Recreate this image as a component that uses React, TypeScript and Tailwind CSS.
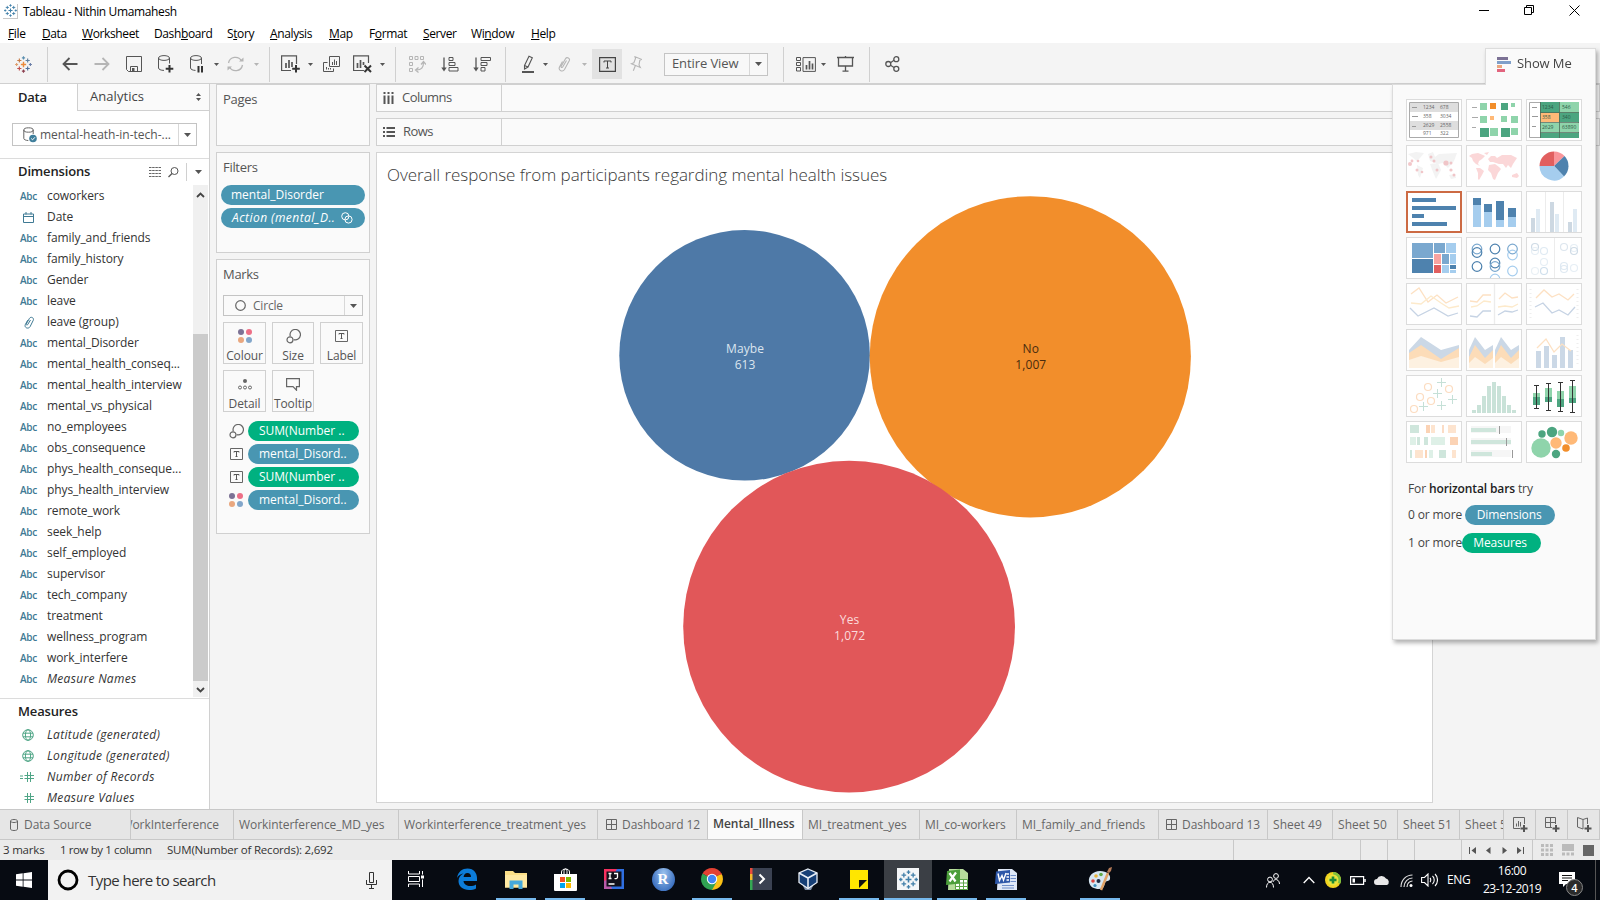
import type { ReactNode } from "react";

type P = { children?: ReactNode; className?: string };

/* ---------- shared primitives ---------- */

function Svg({ w, h, className = "", children }: P & { w: number; h: number }) {
  return (
    <svg width={w} height={h} viewBox={`0 0 ${w} ${h}`} fill="none" className={`shrink-0 ${className}`}>
      {children}
    </svg>
  );
}

function Caret({ className = "", faint = false }: { className?: string; faint?: boolean }) {
  return (
    <Svg w={5} h={3} className={className}>
      <path d="M0 0h5L2.500 3z" fill={faint ? "#b5b5b5" : "#555"} />
    </Svg>
  );
}

function BigCaret({ className = "" }: { className?: string }) {
  return (
    <Svg w={7} h={4} className={className}>
      <path d="M0 0h7L3.500 4z" fill="#555" />
    </Svg>
  );
}

const crossColors = {
  color: ["#eb8a3c", "#c0504d", "#5b8fb0", "#c77a45", "#5f7f9e", "#4f6f9a", "#8c3f4f", "#e0a070", "#6c7fa8"],
  blue: ["#3f7ea8", "#3f7ea8", "#3f7ea8", "#3f7ea8", "#3f7ea8", "#3f7ea8", "#3f7ea8", "#3f7ea8", "#3f7ea8"],
};

function TableauMark({ size, tone, className = "" }: { size: number; tone: "color" | "blue"; className?: string }) {
  const c = crossColors[tone];
  const plus = (x: number, y: number, r: number) => `M${x - r} ${y}h${r * 2}M${x} ${y - r}v${r * 2}`;
  return (
    <svg width={size} height={size} viewBox="0 0 18 18" fill="none" strokeWidth="1.200" className={`shrink-0 ${className}`}>
      <path d={plus(9, 9, 2.8)} stroke={c[0]} strokeWidth="1.500" />
      <path d={plus(4.6, 4.8, 2.2)} stroke={c[3]} />
      <path d={plus(13.4, 4.8, 2.2)} stroke={c[4]} />
      <path d={plus(4.6, 13.2, 2.2)} stroke={c[1]} />
      <path d={plus(13.4, 13.2, 2.2)} stroke={c[5]} />
      <path d={plus(9, 2, 1.7)} stroke={c[2]} />
      <path d={plus(9, 16, 1.7)} stroke={c[6]} />
      <path d={plus(1.7, 9, 1.6)} stroke={c[7]} />
      <path d={plus(16.3, 9, 1.6)} stroke={c[8]} />
    </svg>
  );
}

function TBox({ w = 13, h = 12 }: { w?: number; h?: number }) {
  return (
    <svg width={w} height={h} viewBox="0 0 13 12" fill="none" className="shrink-0">
      <path d="M.5.5h12v11H.5z" stroke="#666" />
      <path d="M4 4.500V3.500h5v1M6.500 3.500v5M5.500 8.500h2" stroke="#555" />
    </svg>
  );
}

function SizeIcon() {
  return (
    <Svg w={15} h={15}>
      <path d="M4.300 7.200A5.200 5.200 0 1 1 7.700 10.600" stroke="#666" strokeWidth="1.200" />
      <circle cx="4" cy="10.800" r="3" stroke="#666" strokeWidth="1.200" />
    </Svg>
  );
}

function Dots() {
  return (
    <Svg w={14} h={14}>
      <circle cx="3" cy="3" r="3" fill="#7c7295" />
      <circle cx="11" cy="3" r="3" fill="#ed6f86" />
      <circle cx="3" cy="11" r="3" fill="#e9a77f" />
      <circle cx="11" cy="11" r="3" fill="#82a6ca" />
    </Svg>
  );
}

/* ---------- title and menu ---------- */

function TitleBar() {
  return (
    <div className="flex h-[22px] items-center bg-white pl-[3px]">
      <div className="flex h-[15px] w-[15px] items-center justify-center border-b border-r border-[#c8c8c8]">
        <TableauMark size={13} tone="blue" />
      </div>
      <span className="ml-[5px] mt-px text-[12px] tracking-[-0.36px] text-black">Tableau - Nithin Umamahesh</span>
      <Svg w={10} h={10} className="ml-auto">
        <path d="M0 4.500h10" stroke="#000" />
      </Svg>
      <Svg w={10} h={10} className="-mt-[2px] ml-[35px]">
        <path d="M.5 2.500h7v7h-7zM2.500 2.500v-2h7v7h-2" stroke="#000" />
      </Svg>
      <Svg w={11} h={11} className="-mt-[2px] ml-[35px] mr-[20px]">
        <path d="M.5.5l10 10M10.500.5l-10 10" stroke="#000" />
      </Svg>
    </div>
  );
}

function MenuBar() {
  const item = "shrink-0 whitespace-nowrap";
  return (
    <div className="flex h-[21px] items-center bg-white pb-[2px] pl-2 pt-[4px] text-[12px] tracking-[-0.38px] text-black">
      <span className={`${item} w-[34px]`}><u>F</u>ile</span>
      <span className={`${item} w-[40px]`}><u>D</u>ata</span>
      <span className={`${item} w-[72px]`}><u>W</u>orksheet</span>
      <span className={`${item} w-[73px]`}>Dash<u>b</u>oard</span>
      <span className={`${item} w-[43px]`}>S<u>t</u>ory</span>
      <span className={`${item} w-[59px]`}><u>A</u>nalysis</span>
      <span className={`${item} w-[40px]`}><u>M</u>ap</span>
      <span className={`${item} w-[54px]`}>F<u>o</u>rmat</span>
      <span className={`${item} w-[48px]`}><u>S</u>erver</span>
      <span className={`${item} w-[60px]`}>Wi<u>n</u>dow</span>
      <span className={item}><u>H</u>elp</span>
    </div>
  );
}

/* ---------- toolbar ---------- */

function Sep({ className = "" }: { className?: string }) {
  return <div className={`h-[35px] w-px shrink-0 bg-[#d0d0d0] ${className}`} />;
}

function Toolbar() {
  const s = "#555";
  const f = "#b5b5b5";
  return (
    <div className="flex h-[41px] items-center border-b border-[#d0d0d0] bg-[#f4f4f4] pt-[2px]">
      <TableauMark size={17} tone="color" className="ml-[15px]" />
      <Sep className="ml-[15px]" />
      <Svg w={16} h={14} className="ml-[14px]"><path d="M15.500 7H1.500M7.500 1l-6 6 6 6" stroke={s} strokeWidth="1.800" /></Svg>
      <Svg w={16} h={14} className="ml-[16px]"><path d="M.5 7h14M8.500 1l6 6-6 6" stroke={f} strokeWidth="1.800" /></Svg>
      <Svg w={16} h={16} className="ml-[16px]">
        <path d="M.5.5h15v15h-13l-2-2z" stroke={s} />
        <path d="M4.500 15.500v-5h7v5" stroke={s} /><path d="M6 12h2.500v3.500H6z" fill={s} />
      </Svg>
      <Svg w={16} h={18} className="ml-[16px]">
        <ellipse cx="6" cy="3" rx="5.500" ry="2.400" stroke={s} />
        <path d="M.5 3v10c0 1.300 2.400 2.400 5.500 2.400M11.500 3v5.500" stroke={s} />
        <path d="M11.500 10v7.500M7.700 13.700h7.600" stroke="#333" strokeWidth="2" />
      </Svg>
      <Svg w={14} h={18} className="ml-[16px]">
        <ellipse cx="6" cy="3" rx="5.500" ry="2.400" stroke={s} />
        <path d="M.5 3v10c0 1.300 2.400 2.400 5 2.400M11.500 3v6" stroke={s} />
        <path d="M8.500 11v6.500M12 11v6.500" stroke="#333" strokeWidth="2" />
      </Svg>
      <Caret className="ml-[10px]" />
      <Svg w={17} h={16} className="ml-[8px]">
        <path d="M1.500 7A7 7 0 0 1 14.500 5M15.500 9A7 7 0 0 1 2.500 11" stroke={f} strokeWidth="1.300" />
        <path d="M12 5.500h4.500V1.500zM5 10.500H.5v4z" fill={f} />
      </Svg>
      <Caret className="ml-[10px]" faint />
      <Sep className="ml-[10px]" />
      <Svg w={19} h={18} className="ml-[11px]">
        <path d="M15.500 9V.9H.6v14.600H10" stroke={s} strokeWidth="1.200" />
        <path d="M5 8v5M8 5v8M11 7v5" stroke={s} strokeWidth="1.700" />
        <path d="M15 10v7.500M11.200 13.700h7.600" stroke="#333" strokeWidth="2" />
      </Svg>
      <Caret className="ml-[8px]" />
      <Svg w={17} h={17} className="ml-[10px]">
        <path d="M6.500.5h10v10h-10zM4.500 6.500h-4v9h10v-3" stroke={s} />
        <path d="M9.500 6v3M11.500 3.500V9M13.500 5v4M3.500 11v2.500M5.500 12v1.500M7.500 12v1.500" stroke={s} />
      </Svg>
      <Svg w={19} h={18} className="ml-[13px]">
        <path d="M15.500 8V.9H.6v14.600H11" stroke={s} strokeWidth="1.200" />
        <path d="M4.500 8v5M7.500 5v8M10.500 7v3" stroke={s} strokeWidth="1.700" />
        <path d="M11.500 10.500l6.500 6.500M18 10.500L11.500 17" stroke="#333" strokeWidth="2" />
      </Svg>
      <Caret className="ml-[8px]" />
      <Sep className="ml-[10px]" />
      <Svg w={17} h={17} className="ml-[13px]">
        <path d="M.5.500h3v3h-3zM6 .5h3v3H6zM11.500.5h3v3h-3zM.5 6.500h3v3h-3zM.5 12.500h3v3h-3z" stroke={f} />
        <path d="M14.500 6.500c0 5-2 7.500-7 7.500M12 8.500l2.500-3 2.500 3M9.500 11.500l-3 2.500 3 2.500" stroke={f} strokeWidth="1.200" />
      </Svg>
      <Svg w={18} h={15} className="ml-[15px]">
        <path d="M3 .5v12" stroke={s} strokeWidth="1.300" /><path d="M.3 10.500h5.400L3 14.500z" fill={s} />
        <path d="M8 .5h4v3H8zM8 5.500h6v3H8zM8 10.500h9v3.500H8z" stroke={s} />
      </Svg>
      <Svg w={18} h={15} className="ml-[14px]">
        <path d="M3 .5v12" stroke={s} strokeWidth="1.300" /><path d="M.3 10.500h5.400L3 14.500z" fill={s} />
        <path d="M8 .5h9.500v3H8zM8 5.500h6v3H8zM8 10.500h4v3.500H8z" stroke={s} />
      </Svg>
      <Sep className="ml-[14px]" />
      <Svg w={12} h={18} className="ml-[16px]">
        <path d="M2.500 10.500L7 1.200l3.300 1.500L6 12l-3.500 2zM2.500 10.500L6 12" stroke={s} strokeWidth="1.100" />
        <path d="M0 17h12" stroke={s} strokeWidth="2" />
      </Svg>
      <Caret className="ml-[9px]" />
      <Svg w={13} h={16} className="ml-[10px]">
        <path d="M8.500 4.500L4.700 11c-.6 1-2 .3-1.500-.8L7.500 2.700c1.300-2.200 5-.6 3.700 2.100L6.500 13.500c-1.800 3-6.500 1-5-2.500l3-5.500" stroke={f} strokeWidth="1.100" />
      </Svg>
      <Caret className="ml-[11px]" faint />
      <div className="ml-[5px] flex h-[30px] w-[30px] items-center justify-center bg-[#e2e2e2]">
        <Svg w={17} h={15}>
          <path d="M.6.6h15.800v13.800H.6z" stroke="#444" strokeWidth="1.200" />
          <path d="M5 5.500V4h7v1.500M8.500 4v7M7 11h3" stroke="#444" />
        </Svg>
      </div>
      <Svg w={12} h={16} className="ml-[8px]">
        <path d="M5 .7l6.500 2.600-1.700 1L9 9l1.300 2.500-9-3.700 2.600-1L5.500 2.500zM5.300 9.800l-2 5" stroke={f} strokeWidth="1.100" />
      </Svg>
      <div className="ml-[22px] flex h-[23px] w-[104px] items-center border border-[#c4c4c4] bg-[#f8f8f8]">
        <span className="w-[84px] whitespace-nowrap pl-[7px] text-[13px] tracking-[-0.1px] text-[#555]">Entire View</span>
        <div className="flex h-full flex-1 items-center justify-center border-l border-[#d8d8d8]"><BigCaret /></div>
      </div>
      <Sep className="ml-[15px]" />
      <Svg w={20} h={15} className="ml-[12px]">
        <path d="M.5.5h4v3h-4zM.5 5.500h4v3h-4zM.5 10.500h4v3.500h-4zM7 .6h12.400v13.800H7z" stroke={s} />
        <path d="M10.500 8v4.500M13.500 4v8.500M16.500 6.500v6" stroke={s} strokeWidth="1.700" />
      </Svg>
      <Caret className="ml-[5px]" />
      <Svg w={17} h={16} className="ml-[11px]">
        <path d="M0 1.500h17M8.500 0v1.500M1.500 1.500v8.500h14V1.500M8.500 10v5M5.500 15.200h6" stroke={s} strokeWidth="1.300" />
      </Svg>
      <Sep className="ml-[15px]" />
      <Svg w={15} h={16} className="ml-[15px]">
        <path d="M5.500 6.700L9 4.300M5.500 9.300L9 11.500" stroke={s} strokeWidth="1.200" />
        <circle cx="3.300" cy="8" r="2.500" stroke={s} strokeWidth="1.300" />
        <circle cx="11.300" cy="3.200" r="2.500" stroke={s} strokeWidth="1.300" />
        <circle cx="11.300" cy="12.800" r="2.500" stroke={s} strokeWidth="1.300" />
      </Svg>
    </div>
  );
}

/* ---------- data pane ---------- */

const dimensions = [
  "coworkers", "Date", "family_and_friends", "family_history", "Gender", "leave", "leave (group)",
  "mental_Disorder", "mental_health_conseq...", "mental_health_interview", "mental_vs_physical",
  "no_employees", "obs_consequence", "phys_health_conseque...", "phys_health_interview", "remote_work",
  "seek_help", "self_employed", "supervisor", "tech_company", "treatment", "wellness_program",
  "work_interfere", "Measure Names",
];
const measures = ["Latitude (generated)", "Longitude (generated)", "Number of Records", "Measure Values"];

function FieldIcon({ name }: { name: string }) {
  if (name === "Date")
    return (
      <Svg w={11} h={11}>
        <path d="M.5 2h10v8.500H.5zM.5 4.500h10M3 0v2.500M8 0v2.500" stroke="#3f7a94" />
      </Svg>
    );
  if (name === "leave (group)")
    return (
      <Svg w={12} h={13}>
        <path d="M7.500 4L4.600 8.700c-.6.900-1.800.2-1.300-.8L6.500 2.300c1.300-2.100 4.800-.6 3.800 1.900L7 10.800c-1.700 2.600-6 1-4.700-2.200l2.400-4.400" stroke="#3f7a94" />
      </Svg>
    );
  return <span className="text-[10px] font-semibold tracking-[-0.2px] text-[#3f7a94]">Abc</span>;
}

function MeasureIcon({ name }: { name: string }) {
  if (name.endsWith("(generated)"))
    return (
      <Svg w={12} h={12} className="mr-px">
        <circle cx="6" cy="6" r="5.300" stroke="#4fa586" />
        <ellipse cx="6" cy="6" rx="2.600" ry="5.300" stroke="#4fa586" />
        <path d="M1 4.200h10M1 7.800h10" stroke="#4fa586" />
      </Svg>
    );
  const calc = name.startsWith("Number");
  return (
    <Svg w={14} h={10} className="mr-[4px]">
      <path d="M7.500 0v10M10.500 0v10M4.500 3.500h9.500M4.500 6.500h9.500" stroke="#4fa586" />
      {calc && <path d="M0 4h3M0 6.500h3" stroke="#4fa586" />}
    </Svg>
  );
}

function DataPane() {
  return (
    <aside className="flex w-[210px] shrink-0 flex-col border-r border-[#d0d0d0] bg-white">
      <div className="flex h-[27px] shrink-0">
        <div className="w-[77px] pl-[18px] pt-[4px] text-[13px] font-semibold tracking-[-0.25px] text-[#222]">Data</div>
        <div className="flex flex-1 items-center border-b border-l border-[#d0d0d0] bg-[#fafafa] pl-[12px] pr-[8px] text-[13px] tracking-[0.05px] text-[#444]">
          <span>Analytics</span>
          <Svg w={5} h={8} className="ml-auto"><path d="M0 3h5L2.500 0zM0 5h5L2.500 8z" fill="#555" /></Svg>
        </div>
      </div>
      <div className="flex h-[48px] shrink-0 items-center border-b border-[#dcdcdc] pl-[12px]">
        <div className="flex h-[23px] w-[185px] items-center border border-[#c4c4c4] bg-white">
          <Svg w={14} h={16} className="ml-[10px]">
            <ellipse cx="5.500" cy="3" rx="4.700" ry="2.200" stroke="#666" />
            <path d="M.8 3v8.500c0 1 2 2 4.500 2M10.200 3v4" stroke="#666" />
            <circle cx="10" cy="11.500" r="3.800" fill="#3f7f9c" />
            <path d="M8.200 11.500l1.400 1.300 2.300-2.500" stroke="#fff" />
          </Svg>
          <span className="ml-[3px] w-[138px] whitespace-nowrap text-[12px] text-[#555]">mental-heath-in-tech-...</span>
          <div className="flex h-full flex-1 items-center justify-center border-l border-[#d8d8d8]"><BigCaret /></div>
        </div>
      </div>
      <div className="flex h-[26px] shrink-0 items-center pl-[18px]">
        <span className="w-[131px] text-[13px] font-semibold tracking-[-0.15px] text-[#222]">Dimensions</span>
        <Svg w={12} h={10}><path d="M0 .5h12M0 3.500h12M0 6.500h12M0 9.500h12" stroke="#666" strokeDasharray="2.500 .667" /></Svg>
        <Svg w={11} h={11} className="ml-[7px]">
          <circle cx="6.500" cy="4" r="3.500" stroke="#555" /><path d="M4 6.500L.5 10" stroke="#555" strokeWidth="1.300" />
        </Svg>
        <div className="ml-[7px] h-[18px] w-px bg-[#d0d0d0]" />
        <BigCaret className="ml-[8px]" />
      </div>
      <div className="flex h-[514px] shrink-0 border-b border-[#dcdcdc]">
        <ul className="w-[193px] text-[12px] tracking-[-0.08px] text-[#333]">
          {dimensions.map((d) => (
            <li key={d} className="flex h-[21px] items-center whitespace-nowrap">
              <span className="flex h-[19px] w-[47px] items-center justify-center pl-[10px]"><span className="mt-[2px] flex w-[26px] justify-center"><FieldIcon name={d} /></span></span>
              <span className={d === "Measure Names" ? "italic tracking-[0.3px]" : ""}>{d}</span>
            </li>
          ))}
        </ul>
        <div className="flex h-[512px] w-[15px] flex-col items-center bg-[#f0f0f0]">
          <Svg w={9} h={6} className="mt-[7px]"><path d="M1 5l3.500-3.500L8 5" stroke="#444" strokeWidth="1.800" /></Svg>
          <div className="mt-[136px] h-[347px] w-full bg-[#cbcbcb]" />
          <Svg w={9} h={6} className="mt-[6px]"><path d="M1 1l3.500 3.500L8 1" stroke="#444" strokeWidth="1.800" /></Svg>
        </div>
      </div>
      <div className="flex h-[25px] shrink-0 items-center pl-[18px] text-[13px] font-semibold tracking-[-0.15px] text-[#222]">Measures</div>
      <ul className="text-[12px] italic tracking-[0.33px] text-[#333]">
        {measures.map((m) => (
          <li key={m} className="flex h-[21px] items-center whitespace-nowrap">
            <span className="flex w-[47px] items-center justify-center pl-[10px]"><MeasureIcon name={m} /></span>
            <span>{m}</span>
          </li>
        ))}
      </ul>
    </aside>
  );
}

/* ---------- cards ---------- */

function Pill({ children, className = "" }: P) {
  return (
    <span className={`flex h-[20px] items-center whitespace-nowrap rounded-full text-[12px] leading-none text-white ${className}`}>{children}</span>
  );
}

const card = "border border-[#d0d0d0] bg-[#fafafa]";

function MarkButton({ icon, label, className = "" }: { icon: ReactNode; label: string; className?: string }) {
  return (
    <div className={`flex h-[42px] flex-col items-center border border-[#d0d0d0] text-[12px] tracking-[-0.1px] text-[#555] ${className}`}>
      <div className="flex h-[26px] items-center">{icon}</div>
      <span className="leading-[14px]">{label}</span>
    </div>
  );
}

function MarkRow({ icon, children }: { icon: ReactNode; children: ReactNode }) {
  return (
    <div className="flex items-center">
      <span className="flex w-[25px] items-center justify-center pl-px">{icon}</span>
      {children}
    </div>
  );
}

function Cards() {
  const label = "pl-[6px] text-[13px] leading-[18px] tracking-[-0.3px] text-[#555]";
  return (
    <div className="flex w-[160px] shrink-0 flex-col gap-[6px] pl-[6px]">
      <section className={`h-[62px] ${card}`}><div className={`pt-[5px] ${label}`}>Pages</div></section>
      <section className={`h-[101px] ${card}`}>
        <div className={`pt-[5px] ${label}`}>Filters</div>
        <div className="flex flex-col gap-[3px] pl-[4px] pr-[4px] pt-[9px]">
          <Pill className="bg-[#4996b2] pl-[10px]">mental_Disorder</Pill>
          <Pill className="bg-[#4996b2] pl-[11px] italic">
            <span className="tracking-[0.45px]">Action (mental_D..</span>
            <Svg w={12} h={12} className="ml-[6px]">
              <circle cx="4.300" cy="4.300" r="3.600" stroke="#fff" /><circle cx="7.500" cy="7.500" r="3.600" stroke="#fff" />
            </Svg>
          </Pill>
        </div>
      </section>
      <section className={`h-[275px] ${card}`}>
        <div className={`pt-[5px] ${label}`}>Marks</div>
        <div className="ml-[6px] mt-[12px] flex h-[21px] w-[140px] items-center border border-[#c4c4c4] bg-[#fafafa]">
          <Svg w={11} h={11} className="ml-[11px]"><circle cx="5.500" cy="5.500" r="4.800" stroke="#666" strokeWidth="1.200" /></Svg>
          <span className="ml-[7px] w-[91px] text-[12px] tracking-[-0.2px] text-[#666]">Circle</span>
          <div className="flex h-full flex-1 items-center justify-center border-l border-[#d8d8d8]"><BigCaret /></div>
        </div>
        <div className="ml-[6px] mt-[6px] grid grid-cols-[43px_42px_43px] gap-x-[6px] gap-y-[6px]">
          <MarkButton icon={<Dots />} label="Colour" />
          <MarkButton icon={<SizeIcon />} label="Size" />
          <MarkButton icon={<TBox />} label="Label" />
          <MarkButton
            icon={<Svg w={14} h={11}><circle cx="7" cy="2" r="2" fill="#666" /><circle cx="2" cy="8.500" r="1.500" stroke="#666" /><circle cx="7" cy="8.500" r="1.500" stroke="#666" /><circle cx="12" cy="8.500" r="1.500" stroke="#666" /></Svg>}
            label="Detail"
          />
          <MarkButton
            icon={<Svg w={14} h={13}><path d="M.6.6h12.800v8h-2.900v3.600L7 8.600H.6z" stroke="#666" strokeWidth="1.200" /></Svg>}
            label="Tooltip"
          />
        </div>
        <div className="ml-[6px] mt-[9px] flex flex-col gap-[3px]">
          <MarkRow icon={<SizeIcon />}><Pill className="w-[111px] bg-[#00b180] pl-[11px]">SUM(Number ..</Pill></MarkRow>
          <MarkRow icon={<TBox />}><Pill className="w-[111px] bg-[#4996b2] pl-[11px]">mental_Disord..</Pill></MarkRow>
          <MarkRow icon={<TBox />}><Pill className="w-[111px] bg-[#00b180] pl-[11px]">SUM(Number ..</Pill></MarkRow>
          <MarkRow icon={<Dots />}><Pill className="w-[111px] bg-[#4996b2] pl-[11px]">mental_Disord..</Pill></MarkRow>
        </div>
      </section>
    </div>
  );
}

/* ---------- shelves and canvas ---------- */

function Shelf({ icon, label, className = "" }: { icon: ReactNode; label: string; className?: string }) {
  return (
    <div className={`flex h-[28px] shrink-0 border border-[#d0d0d0] bg-[#fafafa] ${className}`}>
      <div className="flex w-[125px] items-center border-r border-[#d0d0d0] pl-[6px] text-[13px] tracking-[-0.55px] text-[#555]">
        {icon}
        <span className="ml-[8px]">{label}</span>
      </div>
    </div>
  );
}

function Bubble({ cx, cy, r, fill, ink, name, value, textY }: { cx: number; cy: number; r: number; fill: string; ink: string; name: string; value: string; textY: number }) {
  return (
    <g>
      <circle cx={cx} cy={cy} r={r} fill={fill} />
      <text x={cx + 0.5} y={textY} textAnchor="middle" fill={ink}>{name}</text>
      <text x={cx + 0.5} y={textY + 16} textAnchor="middle" fill={ink}>{value}</text>
    </g>
  );
}

function Worksheet() {
  return (
    <main className="flex flex-1 flex-col pl-[6px]">
      <Shelf
        label="Columns"
        icon={<Svg w={11} h={12}><path d="M1.500 0v2M5.500 0v2M9.500 0v2M1.500 3.500V12M5.500 3.500V12M9.500 3.500V12" stroke="#555" strokeWidth="2" /></Svg>}
      />
      <Shelf
        label="Rows"
        className="mt-[6px]"
        icon={<Svg w={12} h={10}><path d="M0 1h2M0 5h2M0 9h2M3.500 1H12M3.500 5H12M3.500 9H12" stroke="#555" strokeWidth="1.800" /></Svg>}
      />
      <div className="mt-[6px] h-[651px] w-[1057px] shrink-0 border border-[#d4d4d4] bg-white">
        <h1 className="h-[30px] pl-[10px] pt-[9px] text-[17px] font-light leading-[26px] tracking-[-0.05px] text-[#3a3a3a]">
          Overall response from participants regarding mental health issues
        </h1>
        <svg width="1055" height="618" viewBox="377 183 1055 618" className="text-[12px] tracking-[0.1px]">
          <Bubble cx={744.6} cy={355.3} r={125.3} fill="#4e79a7" ink="#dbe5ef" name="Maybe" value="613" textY={353} />
          <Bubble cx={1030.3} cy={356.8} r={160.6} fill="#f28e2b" ink="#4a2c0e" name="No" value="1,007" textY={353} />
          <Bubble cx={849.1} cy={626.6} r={165.9} fill="#e15759" ink="#fbdcdc" name="Yes" value="1,072" textY={624} />
        </svg>
      </div>
    </main>
  );
}

/* ---------- show me panel ---------- */

const G = "#8fd4ab", D = "#4ca580", B = "#4e82ae", LB = "#a5cdee", MB = "#7aa8cf", O = "#ffb977";

function Rects({ data }: { data: [number, number, number, number, string][] }) {
  return <>{data.map(([x, y, w, h, c], i) => <rect key={i} x={x} y={y} width={w} height={h} fill={c} />)}</>;
}

function Rings({ data, r = 4.5 }: { data: [number, number, string][]; r?: number }) {
  return <>{data.map(([x, y, c], i) => <circle key={i} cx={x} cy={y} r={r} stroke={c} strokeWidth="1.200" />)}</>;
}

const thumbs: ReactNode[] = [
  <>
    <path d="M3.500 3.500h49v35h-49z" fill="#fff" stroke="#aaa" />
    <Rects data={[[4, 4, 48, 9, "#dedede"], [4, 22, 48, 9, "#dedede"], [6, 8, 5, 1, "#999"], [6, 17, 6, 1, "#999"], [6, 27, 4, 1, "#999"]]} />
    <g fontSize="5" fill="#666"><text x="17" y="10">1234</text><text x="34" y="10">678</text><text x="17" y="19">358</text><text x="34" y="19">3034</text><text x="17" y="28">2629</text><text x="34" y="28">2558</text><text x="17" y="36">971</text><text x="34" y="36">322</text></g>
  </>,
  <Rects data={[[14, 4, 7, 7, G], [24, 4, 6, 6, "#f28e2b"], [35, 4, 7, 7, D], [45, 4, 4, 4, G], [14, 17, 7, 7, G], [24, 17, 4, 4, O], [35, 17, 6, 6, G], [45, 17, 7, 7, G], [14, 29, 9, 9, D], [24, 29, 8, 8, G], [35, 29, 9, 9, D], [45, 29, 7, 7, G], [6, 8, 5, 1, "#aaa"], [6, 18, 6, 1, "#aaa"], [6, 28, 4, 1, "#aaa"]]} />,
  <>
    <path d="M3.500 3.500h49v35h-49z" fill="#fff" stroke="#aaa" />
    <Rects data={[[14, 3, 19, 11, D], [33, 3, 20, 11, G], [14, 14, 19, 9, O], [33, 14, 20, 9, D], [14, 24, 39, 9, G], [14, 34, 39, 5, D], [6, 8, 5, 1, "#999"], [6, 17, 6, 1, "#999"], [6, 27, 4, 1, "#999"]]} />
    <path d="M14 13.500h39M14 23.500h39M14 33.500h39M33.500 3v36M14.500 3v36" stroke="#4d6b58" strokeWidth=".8" />
    <g fontSize="5" fill="#2c5a46"><text x="16" y="10">1234</text><text x="36" y="10">546</text><text x="16" y="20">358</text><text x="36" y="20">340</text><text x="16" y="30">2629</text><text x="36" y="30">63890</text></g>
  </>,
  <>
    <path d="M2 9l8-2 8 1-4 5-3 3-5-4zM11 20l6 3-3 10-2-3zM22 9l5-2 2 5 4-3 18-1-3 8-6 7-5-5-5 1-8-3zM24 19l8-1 3 7-5 9-3-7zM43 30l6-1 1 4-5 1z" fill="#f3f3f3" />
    {[[4, 19, 2], [6, 16, 1.4], [12, 16, 1.3], [11, 25, 1.5], [16, 27, 1.3], [25, 12, 1.5], [28, 16, 1.5], [31, 25, 1.5], [40, 18, 2.6], [45, 18, 1.5], [45, 25, 1.6], [48, 30, 1.5]].map(([x, y, r], i) => <circle key={i} cx={x} cy={y} r={r} fill="#efb9bd" opacity=".8" />)}
  </>,
  <path d="M3 11l3-2 6-1 5 2 2 1-3 3-3 2-1 3 2 2-4-2-3-3-1-3zM10 23l4 0 4 3-2 4-3 5-1-1 0-6zM22 14l3-3 4 0 2 2 5-3 9 0 6 3-2 3-2 3-2 4-3-3-2 3-3-4-4 0-6-2-3 0zM23 20l6-1 4 3 2 2-3 4-3 7-2-1-2-6-3-3zM46 30l5-2 2 3-2 2-5-1zM18 8l5-1-2 3z" fill="#fbd7d8" />,
  <>
    <path d="M28 21V6.500A14.500 14.500 0 0 0 13.500 21z" fill="#e15f5f" />
    <path d="M28 21V6.500a14.500 14.500 0 0 1 10.500 4.500z" fill="#f9959a" />
    <path d="M28 21l10.500-10A14.500 14.500 0 0 1 38 31.500z" fill={B} />
    <path d="M28 21l10 10.500A14.500 14.500 0 0 1 13.500 21z" fill={LB} />
  </>,
  <Rects data={[[6, 7, 24, 4, B], [6, 15, 44, 4, B], [6, 23, 12, 4, B], [6, 31, 35, 4, B]]} />,
  <Rects data={[[7, 7, 8, 7, B], [7, 14, 8, 22, LB], [18, 13, 8, 8, B], [18, 21, 8, 15, LB], [30, 10, 8, 19, B], [30, 29, 8, 7, LB], [42, 17, 8, 9, B], [42, 26, 8, 10, LB]]} />,
  <Rects data={[[19, 1, 1, 40, "#ececec"], [37, 1, 1, 40, "#ececec"], [5, 27, 4, 14, "#cdd8e2"], [10, 18, 4, 23, "#dfeaf3"], [24, 11, 4, 30, "#cdd8e2"], [29, 23, 4, 18, "#dfeaf3"], [42, 31, 4, 10, "#cdd8e2"], [47, 18, 4, 23, "#dfeaf3"]]} />,
  <Rects data={[[6, 6, 21, 15, MB], [6, 22, 21, 14, B], [28, 6, 11, 10, MB], [40, 6, 10, 10, LB], [28, 17, 7, 10, "#f9a3a0"], [36, 17, 7, 10, MB], [44, 17, 6, 10, LB], [28, 28, 7, 8, "#e15f5f"], [36, 28, 7, 8, LB], [44, 28, 6, 4, B], [44, 33, 6, 3, LB]]} />,
  <Rings r={4.8} data={[[11, 12, MB], [11, 15.5, B], [11, 29.5, B], [29, 12, B], [29, 26, B], [29, 29.5, MB], [29, 42, LB], [46.500, 12, MB], [46.500, 18, LB], [46.500, 34, LB]]} />,
  <>
    <path d="M28.500 1v40" stroke="#ececec" />
    <Rings r={3.500} data={[[9, 10, "#cfdbe6"], [9, 14, "#e6eef5"], [18, 14, "#dfeaf3"], [18, 25, "#e6eef5"], [9, 34, "#e9f0f5"], [18, 34, "#cfdfec"], [38, 10, "#dde6ee"], [48, 11, "#e6eef5"], [48, 14, "#cfdbe6"], [38, 29, "#dfe9f2"], [38, 32, "#dfe9f2"], [48, 31, "#e6eef5"]]} />
  </>,
  <g strokeWidth="1.300">
    <path d="M5 11l8-6 9 14 9-7 9 8 12-6" stroke="#fde1c3" /><path d="M5 20l10 1 10-8 10 7 8 5 10-2" stroke="#fdeacb" />
    <path d="M4 25l8 8 16-8 14 8 10-3" stroke="#c6d3e4" />
  </g>,
  <g strokeWidth="1.300">
    <path d="M28.500 1v40" stroke="#ececec" /><path d="M4 18l7 1 6-7h8M33 16l6-6 7 5 6-1" stroke="#fde1c3" /><path d="M5 24l6-1 7-5 7 1M32 24l7-1 7 1 6-3" stroke="#fdeacb" />
    <path d="M4 33l7 1 6-6h8M32 32l7-4 7 1 6-2" stroke="#c6d3e4" />
  </g>,
  <g strokeWidth="1.300">
    <path d="M10 15l8-8 8 7 7-3 9 6 6-6" stroke="#fde1c3" /><path d="M9 24l8-4 9 10 7-3 9 5 7-8" stroke="#c6d3e4" />
    <path d="M51.500 6v32M4.500 6v32" stroke="#eee" strokeWidth="2" strokeDasharray="1 3" />
  </g>,
  <>
    <path d="M3 21L15 8l20 13 18-5v22H3z" fill="#cbd8e6" /><path d="M3 24l12-8 20 14 18-11v20H3z" fill="#fcdcb8" /><path d="M3 31l12-4 20 6 18-5v11H3z" fill="#fdf1e1" />
  </>,
  <>
    <path d="M3 21L9 8l10 13 8-5v23H3zM29 21l6-13 10 13 8-5v23H29z" fill="#cbd8e6" /><path d="M3 28l6-12 10 13 8-8v18H3zM29 28l6-12 10 13 8-8v18H29z" fill="#fcdcb8" /><path d="M3 34l6-6 10 7 8-6v10H3zM29 34l6-6 10 7 8-6v10H29z" fill="#fdf1e1" />
  </>,
  <>
    <Rects data={[[10, 22, 5, 17, "#cbd8e6"], [18, 17, 5, 22, "#cbd8e6"], [26, 26, 5, 13, "#cbd8e6"], [34, 8, 5, 31, "#cbd8e6"], [42, 21, 5, 18, "#cbd8e6"]]} />
    <path d="M11 19l9-9 8 13 8-8 9 7" stroke="#fde1c3" strokeWidth="1.300" /><path d="M51.500 6v32" stroke="#eee" strokeWidth="2" strokeDasharray="1 3" />
  </>,
  <>
    <Rings r={3.500} data={[[8, 34, "#fcdcc0"], [14, 22, "#fcdcc0"], [22, 12, "#fcdcc0"], [25, 26, "#fcdcc0"], [43, 14, "#fcdcc0"]]} />
    <path d="M31 7.500h9M35.500 3v9M27 18.500h9M31.500 14v9M42 24.500h9M46.500 20v9M31 30.500h9M35.500 26v9M13 31.500h9M17.500 27v9" stroke="#c5e0d7" />
  </>,
  <Rects data={[[6, 35, 4, 3, "#c9e2d8"], [11, 30, 4, 8, "#c9e2d8"], [16, 21, 4, 17, "#c9e2d8"], [21, 11, 4, 27, "#c9e2d8"], [26, 7, 4, 31, "#c9e2d8"], [31, 11, 4, 27, "#c9e2d8"], [36, 21, 4, 17, "#c9e2d8"], [41, 30, 4, 8, "#c9e2d8"], [46, 35, 4, 3, "#c9e2d8"]]} />,
  <>
    <Rects data={[[7, 18, 7, 4, G], [7, 22, 7, 8, D], [19, 13, 7, 9, G], [19, 22, 7, 5, D], [31, 16, 7, 8, G], [31, 24, 7, 8, D], [43, 11, 7, 12, G], [43, 23, 7, 5, D]]} />
    <path d="M10.500 10v23M22.500 8v27M34.500 7v29M46.500 5v32M8 10.500h5M8 33.500h5M20 8.500h5M20 35.500h5M32 7.500h5M32 36.500h5M44 5.500h5M44 37.500h5" stroke="#333" />
  </>,
  <Rects data={[[4, 4, 9, 8, "#cfe6dc"], [20, 4, 4, 8, "#fbd3b5"], [25, 4, 4, 8, "#fde4cf"], [36, 4, 2, 8, "#fbdcc5"], [42, 4, 8, 8, "#fde4cf"], [4, 16, 6, 8, "#def0e7"], [11, 16, 3, 8, "#cfe6dc"], [18, 16, 4, 8, "#cfe6dc"], [25, 16, 14, 8, "#def0e7"], [44, 16, 8, 8, "#fbd3b5"], [4, 29, 2, 8, "#cfe6dc"], [9, 29, 8, 8, "#fde4cf"], [19, 29, 2, 8, "#fbd3b5"], [23, 29, 4, 8, "#def0e7"], [33, 29, 7, 8, "#cfe6dc"], [46, 29, 4, 8, "#fde4cf"]]} />,
  <Rects data={[[5, 5, 40, 7, "#f6f6f6"], [5, 7, 25, 4, "#cfe6dc"], [5, 17, 40, 7, "#f6f6f6"], [5, 19, 40, 4, "#cfe6dc"], [5, 29, 40, 7, "#f6f6f6"], [5, 31, 21, 4, "#cfe6dc"], [33, 5, 1, 8, "#999"], [40, 17, 1, 8, "#999"], [46, 29, 1, 8, "#999"]]} />,
  <>
    {([[15, 27, 9.7, G], [16, 13, 3.7, D], [26, 11, 5.2, D], [35, 12, 3.2, G], [45, 17, 6.7, O], [30, 22, 5.7, O], [40, 27, 3.8, "#f28e2b"], [30, 33, 4.2, D]] as [number, number, number, string][]).map(([x, y, r, c], i) => <circle key={i} cx={x} cy={y} r={r} fill={c} />)}
  </>,
];

function ShowMe() {
  return (
    <div className="absolute left-[1392px] top-[48px] w-[204px] drop-shadow-[2px_3px_2px_rgba(0,0,0,0.3)]">
      <div className="relative z-10 -mb-px ml-[93px] flex h-[37px] items-center border border-b-0 border-[#dcdcdc] bg-[#fafafa] pb-[6px] pl-[11px]">
        <Svg w={14} h={15}>
          <Rects data={[[0, 0, 11, 3, "#7c7295"], [0, 4, 14, 3, "#7f9fc9"], [0, 8, 5, 3, "#e9a77f"], [0, 12, 8, 3, "#e2647e"]]} />
        </Svg>
        <span className="ml-[6px] text-[13px] tracking-[-0.1px] text-[#444]">Show Me</span>
      </div>
      <div className="h-[556px] border border-[#dcdcdc] bg-[#fafafa] pl-[13px] pt-[14px]">
        <div className="grid grid-cols-[56px_56px_56px] gap-1">
          {thumbs.map((t, i) => (
            <div key={i} className={i === 6 ? "h-[42px] bg-white outline-2 -outline-offset-2 outline-[#cc6a43]" : "h-[42px] bg-white outline-1 -outline-offset-1 outline-[#dcdcdc]"}>
              <Svg w={56} h={42} className="block">{t}</Svg>
            </div>
          ))}
        </div>
        <div className="mt-[17px] pl-[2px] text-[12px] tracking-[-0.12px] text-[#444]">
          <p className="leading-[18px]">For <b className="font-semibold text-[#222]">horizontal bars</b> try</p>
          <p className="mt-[7px] flex items-center">0 or more <Pill className="ml-[3px] w-[90px] justify-center pr-[2px] bg-[#4996b2]">Dimensions</Pill></p>
          <p className="mt-[8px] flex items-center">1 or more <Pill className="w-[79px] justify-center pr-[3px] bg-[#00b180]">Measures</Pill></p>
        </div>
      </div>
    </div>
  );
}

/* ---------- sheet tabs and status ---------- */

function GridIcon() {
  return <Svg w={11} h={11} className="mr-[5px]"><path d="M.5.5h10v10H.5zM.5 5.500h10M5.500.5v10" stroke="#666" /></Svg>;
}

function SheetTab({ children, className = "" }: P) {
  return <div className={`flex h-full shrink-0 items-center overflow-hidden whitespace-nowrap border-r border-[#c8c8c8] ${className}`}>{children}</div>;
}

function SheetTabs() {
  return (
    <div className="flex h-[31px] border-y border-[#c8c8c8] bg-[#e6e6e6] text-[12px] tracking-[-0.05px] text-[#666]">
      <SheetTab className="w-[131px] pl-[10px]">
        <Svg w={8} h={12} className="mr-[6px]"><path d="M.5 2v8c0 2 7 2 7 0V2c0-2-7-2-7 0zc0 2 7 2 7 0" stroke="#666" /></Svg>
        Data Source
      </SheetTab>
      <SheetTab className="w-[103px] justify-end pr-[14px]"><span>WorkInterference</span></SheetTab>
      <SheetTab className="w-[165px] pl-[5px]">Workinterference_MD_yes</SheetTab>
      <SheetTab className="w-[199px] pl-[5px]">Workinterference_treatment_yes</SheetTab>
      <SheetTab className="w-[110px] pl-[8px]"><GridIcon />Dashboard 12</SheetTab>
      <SheetTab className="w-[95px] bg-[#fafafa] pb-[2px] pl-[5px] font-semibold text-[#444]">Mental_Illness</SheetTab>
      <SheetTab className="w-[117px] pl-[5px]">MI_treatment_yes</SheetTab>
      <SheetTab className="w-[97px] pl-[5px]">MI_co-workers</SheetTab>
      <SheetTab className="w-[142px] pl-[5px]">MI_family_and_friends</SheetTab>
      <SheetTab className="w-[109px] pl-[7px]"><GridIcon />Dashboard 13</SheetTab>
      <SheetTab className="w-[65px] pl-[5px] tracking-[0.05px]">Sheet 49</SheetTab>
      <SheetTab className="w-[65px] pl-[5px] tracking-[0.05px]">Sheet 50</SheetTab>
      <SheetTab className="w-[62px] pl-[5px] tracking-[0.05px]">Sheet 51</SheetTab>
      <SheetTab className="w-[44px] pl-[5px] tracking-[0.05px]">Sheet 52</SheetTab>
      <SheetTab className="w-[32px] pl-[9px]">
        <Svg w={15} h={15}><path d="M11.500 7V.5H.5v11H7M3.500 6.500v3M5.500 4v5.500M7.500 5v4.500" stroke="#666" /><path d="M11 8v7M7.500 11.500h7" stroke="#555" strokeWidth="2" /></Svg>
      </SheetTab>
      <SheetTab className="w-[32px] pl-[9px]">
        <Svg w={15} h={15}><path d="M10.500 7V.5H.5v10H7M.5 5.500h10M5.500.5v10" stroke="#666" /><path d="M11 8v7M7.500 11.500h7" stroke="#555" strokeWidth="2" /></Svg>
      </SheetTab>
      <SheetTab className="w-[32px] pl-[9px]">
        <Svg w={15} h={15}><path d="M10.500 7V1L6 2.500.5.5v9.500l5.500 2V2.500" stroke="#666" /><path d="M11 8v7M7.500 11.500h7" stroke="#555" strokeWidth="2" /></Svg>
      </SheetTab>
    </div>
  );
}

function StatusBar() {
  return (
    <div className="flex h-[20px] items-center bg-[#ebebeb] text-[11.5px] tracking-[-0.2px] text-[#333]">
      <span className="w-[57px] pl-[3px]">3 marks</span>
      <span className="w-[107px] pl-[3px] tracking-[-0.4px]">1 row by 1 column</span>
      <span className="w-[1069px] pl-[3px]">SUM(Number of Records): 2,692</span>
      <div className="h-full w-[127px] border-l border-[#c8c8c8]" />
      <div className="h-full w-[27px] border-l border-[#c8c8c8]" />
      <div className="h-full w-[27px] border-l border-[#c8c8c8]" />
      <div className="h-full w-[47px] border-l border-[#c8c8c8]" />
      <div className="flex h-full w-[71px] items-center border-l border-[#c8c8c8] pl-[7px]">
        <Svg w={8} h={7}><path d="M.5 0v7" stroke="#555" /><path d="M7 0v7L2.500 3.500z" fill="#555" /></Svg>
        <Svg w={5} h={7} className="ml-[9px]"><path d="M4.500 0v7L0 3.500z" fill="#555" /></Svg>
        <Svg w={5} h={7} className="ml-[11px]"><path d="M.5 0v7L5 3.500z" fill="#555" /></Svg>
        <Svg w={8} h={7} className="ml-[9px]"><path d="M7.500 0v7" stroke="#555" /><path d="M1 0v7l4.500-3.500z" fill="#555" /></Svg>
      </div>
      <div className="flex h-full flex-1 items-center border-l border-[#c8c8c8] pl-[8px]">
        <Svg w={12} h={12}><path d="M0 1.500h12M0 6h12M0 10.500h12" stroke="#bbb" strokeWidth="3" strokeDasharray="3 1.500" /></Svg>
        <Svg w={12} h={12} className="ml-[9px]"><path d="M0 0h12v7H0z" fill="#bbb" /><path d="M0 10h12" stroke="#bbb" strokeWidth="3" strokeDasharray="3 1.500" /></Svg>
        <Svg w={11} h={11} className="ml-[9px]"><path d="M0 0h11v11H0z" fill="#666" /></Svg>
      </div>
    </div>
  );
}

/* ---------- taskbar ---------- */

function TaskButton({ children, className = "", open = false, wide = false }: P & { open?: boolean; wide?: boolean }) {
  return (
    <div className={`flex h-full w-[48px] shrink-0 flex-col items-center justify-between ${className}`}>
      <span className="flex h-[38px] items-center">{children}</span>
      {open && <span className={wide ? "h-[2px] w-full bg-[#76b9ed]" : "h-[2px] w-[40px] bg-[#76b9ed]"} />}
    </div>
  );
}

function Taskbar() {
  return (
    <div className="flex h-[40px] bg-[#070b12]">
      <div className="flex w-[48px] items-center justify-center">
        <Svg w={16} h={16}><path d="M0 2.200L6.700 1.300v6.300H0zM7.500 1.200L16 0v7.600H7.500zM0 8.400h6.700v6.300L0 13.800zM7.500 8.400H16V16l-8.500-1.200z" fill="#fff" /></Svg>
      </div>
      <div className="flex w-[344px] items-center bg-[#f2f2f2] text-[#333]">
        <Svg w={22} h={22} className="ml-[9px]"><circle cx="11" cy="11" r="9" stroke="#000" strokeWidth="2.800" /></Svg>
        <span className="ml-[9px] text-[15px] tracking-[-0.55px]">Type here to search</span>
        <Svg w={11} h={17} className="ml-auto mr-[15px]"><path d="M3.500.5h4v10h-4zM.5 8v4.500h10V8M5.500 12.500v4M3 16.500h5" stroke="#333" /></Svg>
      </div>
      <div className="flex pl-[2px]">
        <TaskButton className="pr-[4px]">
          <Svg w={16} h={16}><path d="M.5 0v3h11V0M.5 5.500h11v5H.5zM.5 16v-3h11v3M14.500 0v3.500M14.500 8.500V16" stroke="#fff" /><path d="M13 4.500h3v3h-3z" fill="#fff" /></Svg>
        </TaskButton>
        <TaskButton className="ml-px">
          <Svg w={22} h={22}><path d="M1 10C2 3.500 6.500.5 11.500.5 18 .5 21 5.500 21 10v3H7.500c.3 3.500 3.500 5 6.500 5 2.500 0 4.500-.7 6-1.600v4c-1.800 1-4.200 1.600-7 1.600C7 22 2.500 18.500 2.500 13c0-3.500 2-6 5-7.500C4.500 6 2.300 7.500 1 10zm6.600-1H15c0-2.500-1.300-4-3.600-4S7.800 6.800 7.600 9z" fill="#0c7cd9" fillRule="evenodd" /></Svg>
        </TaskButton>
        <TaskButton open className="ml-px">
          <Svg w={22} h={19}><path d="M0 1h8l2 2h12v14.500H0z" fill="#fbdf87" /><path d="M0 5h22v12.500H0z" fill="#ffe9a2" /><path d="M4.500 19v-8.500h13V19h-4v-4.500h-5V19z" fill="#45a9dc" /></Svg>
        </TaskButton>
        <TaskButton open className="ml-px">
          <Svg w={23} h={23}>
            <path d="M7.500 7V4c0-4 8-4 8 0v3M10 7V3.500C10 0 13 0 13 3.500V7" stroke="#fff" /><path d="M0 6h23v15.500c0 1-.5 1.500-1.500 1.500h-20C.5 23 0 22.500 0 21.500z" fill="#fff" />
            <Rects data={[[6, 9, 5, 5, "#f25022"], [12, 9, 5, 5, "#7fba00"], [6, 15, 5, 5, "#00a4ef"], [12, 15, 5, 5, "#ffb900"]]} />
          </Svg>
        </TaskButton>
        <TaskButton className="ml-px">
          <Svg w={20} h={20}>
            <path d="M0 0h20v20H0z" fill="#2f6fe0" /><path d="M0 0h13l-3 5-10 9z" fill="#f5315f" /><path d="M0 12l5-2 3 10H0z" fill="#b75aa8" /><path d="M2.500 2.500h15v15h-15z" fill="#10101a" />
            <path d="M4.500 4.500h3M4.500 9.500h3M6 4.500v5M10 4.500h3.500v3.500c0 1.500-1.500 2-3 1.500M4.500 15h6" stroke="#fff" strokeWidth="1.300" />
          </Svg>
        </TaskButton>
        <TaskButton className="ml-px">
          <div className="flex h-[23px] w-[23px] items-center justify-center rounded-full bg-radial-[at_50%_25%] from-[#9cc3ee] to-[#1c55b0] font-['Liberation_Serif',serif] text-[15px] font-bold text-white">R</div>
        </TaskButton>
        <TaskButton open className="ml-px">
          <Svg w={22} h={22}>
            <path d="M11 11L1.500 5.500A11 11 0 0 1 20.500 5.500z" fill="#e34133" /><path d="M11 11l9.500-5.500A11 11 0 0 1 11 22l-.500-4z" fill="#fbc116" /><path d="M11 11L1.500 5.500A11 11 0 0 0 11 22l4.500-8z" fill="#30a252" />
            <path d="M1.500 5.500h19l.500 1H11z" fill="#e34133" /><circle cx="11" cy="11" r="5.200" fill="#fff" /><circle cx="11" cy="11" r="4.200" fill="#4285f4" />
          </Svg>
        </TaskButton>
        <TaskButton className="ml-px">
          <Svg w={22} h={22}>
            <path d="M2 0h20v22H2z" fill="#3b4252" /><Rects data={[[0, 0, 2.500, 6, "#e84b3c"], [0, 6, 2.500, 6, "#f5b92c"], [0, 12, 2.500, 10, "#35a853"]]} /><path d="M9.500 6.500l4.500 4.500-4.500 4.500" stroke="#fff" strokeWidth="2" />
          </Svg>
        </TaskButton>
        <TaskButton className="ml-px pr-[4px]">
          <Svg w={20} h={23}>
            <path d="M5 18h10l-2 4H7z" fill="#7d8ea8" /><path d="M10 1l9 4v9.500l-9 6L1 14.500V5z" fill="#163f76" stroke="#e8eef6" strokeWidth="1.300" /><path d="M1 5l9 5 9-5M10 10v10.500" stroke="#e8eef6" strokeWidth="1.600" />
          </Svg>
        </TaskButton>
        <TaskButton open className="ml-px">
          <Svg w={18} h={19}><path d="M0 0h18v19H0z" fill="#ffe600" /><path d="M9 18v-8h8z" fill="#111" /></Svg>
        </TaskButton>
        <TaskButton open wide className="ml-px bg-[#3b3f45]">
          <div className="flex h-[22px] w-[22px] items-center justify-center bg-[#f4f6f8]"><TableauMark size={19} tone="blue" /></div>
        </TaskButton>
        <TaskButton open className="ml-px">
          <Svg w={24} h={23}>
            <path d="M4 1l14 0 5 4v17H3z" fill="#b7dd9c" /><path d="M10.500 11.500h12v10h-12z" fill="#fff" stroke="#5da648" /><path d="M10.500 15h12M10.500 18.500h12M14.500 11.500v10M18.500 11.500v10" stroke="#5da648" />
            <path d="M2 3l13-1.500v14L1 17z" fill="#4c9e3b" /><path d="M4.500 5l6 8.500M11 4.500l-6.500 9" stroke="#fff" strokeWidth="2.200" />
          </Svg>
        </TaskButton>
        <TaskButton open className="ml-px">
          <Svg w={24} h={23}>
            <path d="M4 1h14l5 4v17H3z" fill="#dfe8f7" /><path d="M8 17.500h12M8 20h12M16.500 7.500H22M16.500 10.500H22M16.500 13.500H22" stroke="#6f8fca" /><path d="M2 3.500l14-1.500v12.500L1 16z" fill="#2d57a8" />
            <path d="M4 5.500l1.500 7 2.500-5 1.500 4.500L12 5M12.500 6h2.500M12.500 9H15M12.500 12H15" stroke="#fff" strokeWidth="1.400" />
          </Svg>
        </TaskButton>
        <TaskButton open className="ml-[46px]">
          <Svg w={25} h={24}>
            <path d="M1 15C0 9 5 4 12 4s11 4 10 8c-1 3-4 1-5 4s-1 6-6 6S2 20 1 15z" fill="#d6e6f2" />
            <circle cx="5" cy="14" r="1.800" fill="#d9443f" /><circle cx="8" cy="9" r="1.800" fill="#e8b33c" /><circle cx="13" cy="7.500" r="1.800" fill="#5fa947" /><circle cx="10.500" cy="14" r="2" fill="#1c2b45" /><circle cx="7" cy="18.500" r="1.600" fill="#3d8fbd" />
            <path d="M13 23L20 6" stroke="#e0a266" strokeWidth="2.500" /><path d="M19 5l2-4 3-1-1 4-2 2z" fill="#b57b58" />
          </Svg>
        </TaskButton>
      </div>
      <div className="flex flex-1 items-center pl-[142px] text-[12px] text-white">
        <Svg w={14} h={15}><circle cx="4" cy="6.500" r="2.400" stroke="#fff" /><path d="M.5 14.500c0-7 7-7 7 0" stroke="#fff" /><circle cx="10" cy="3" r="2.400" stroke="#fff" /><path d="M7 9c1-4 6.500-3 6.500 2" stroke="#fff" /></Svg>
        <Svg w={12} h={8} className="ml-[23px]"><path d="M.7 7L6 1.500 11.300 7" stroke="#fff" strokeWidth="1.300" /></Svg>
        <Svg w={16} h={16} className="ml-[10px]"><circle cx="8" cy="8" r="8" fill="#f2d41f" /><path d="M8 0a8 8 0 0 1 7 12L9 8z" fill="#7ec13d" /><circle cx="8" cy="8" r="5.500" fill="#e9e43a" /><path d="M8 4.500v7M4.500 8h7" stroke="#1d8a35" strokeWidth="2.600" /></Svg>
        <Svg w={16} h={9} className="ml-[9px]"><path d="M.6.6h13v7.800H.6z" stroke="#fff" strokeWidth="1.200" /><path d="M15 3v3" stroke="#fff" strokeWidth="1.500" /><path d="M2.500 2.500H5v4H2.500z" fill="#fff" /></Svg>
        <Svg w={16} h={10} className="ml-[8px]"><path d="M3 10a3 3 0 0 1 0-6 5 5 0 0 1 9-.5A3.500 3.500 0 0 1 13 10z" fill="#e8e8e8" /></Svg>
        <Svg w={13} h={13} className="ml-[10px]"><path d="M1 13C1 6 6 1 12.500 1M4 13c0-5 4-9 8.500-9M7 13c0-3.500 2.500-6 5.500-6" stroke="#ddd" strokeWidth="1.200" /><circle cx="11" cy="11.500" r="1.500" fill="#fff" /></Svg>
        <Svg w={17} h={14} className="ml-[8px]"><path d="M.6 4.500h2.900L7 1v12L3.500 9.500H.6zM9 5c1 1 1 3 0 4M11.500 3c2.300 2 2.300 6 0 8M14 1c3.300 3 3.300 9 0 12" stroke="#fff" strokeWidth="1.100" /></Svg>
        <span className="ml-[9px] w-[34px] text-[12px] tracking-[-0.3px]">ENG</span>
        <div className="flex w-[62px] flex-col items-center text-[12px] leading-[18px] tracking-[-0.45px]">
          <span>16:00</span>
          <span>23-12-2019</span>
        </div>
        <div className="relative ml-[16px] h-[16px] w-[16px]">
          <Svg w={16} h={16}><path d="M0 0h16v12H7l-3 3v-3H0z" fill="#fff" /><path d="M3 3.500h10M3 6h10M3 8.500h6" stroke="#111" /></Svg>
          <span className="absolute left-[7px] top-[7px] flex h-[17px] w-[17px] items-center justify-center rounded-full border border-[#888] bg-[#2b2b2b] text-[11px] font-semibold leading-none">4</span>
        </div>
        <div className="ml-auto mr-[4px] h-full w-px bg-[#555]" />
      </div>
    </div>
  );
}

export default function App() {
  return (
    <div className="relative flex h-[900px] w-[1600px] flex-col overflow-hidden bg-[#f4f4f4] font-['Open_Sans','Noto_Sans',sans-serif]">
      <TitleBar />
      <MenuBar />
      <Toolbar />
      <div className="flex h-[725px]">
        <DataPane />
        <Cards />
        <Worksheet />
      </div>
      <SheetTabs />
      <StatusBar />
      <Taskbar />
      <ShowMe />
    </div>
  );
}
